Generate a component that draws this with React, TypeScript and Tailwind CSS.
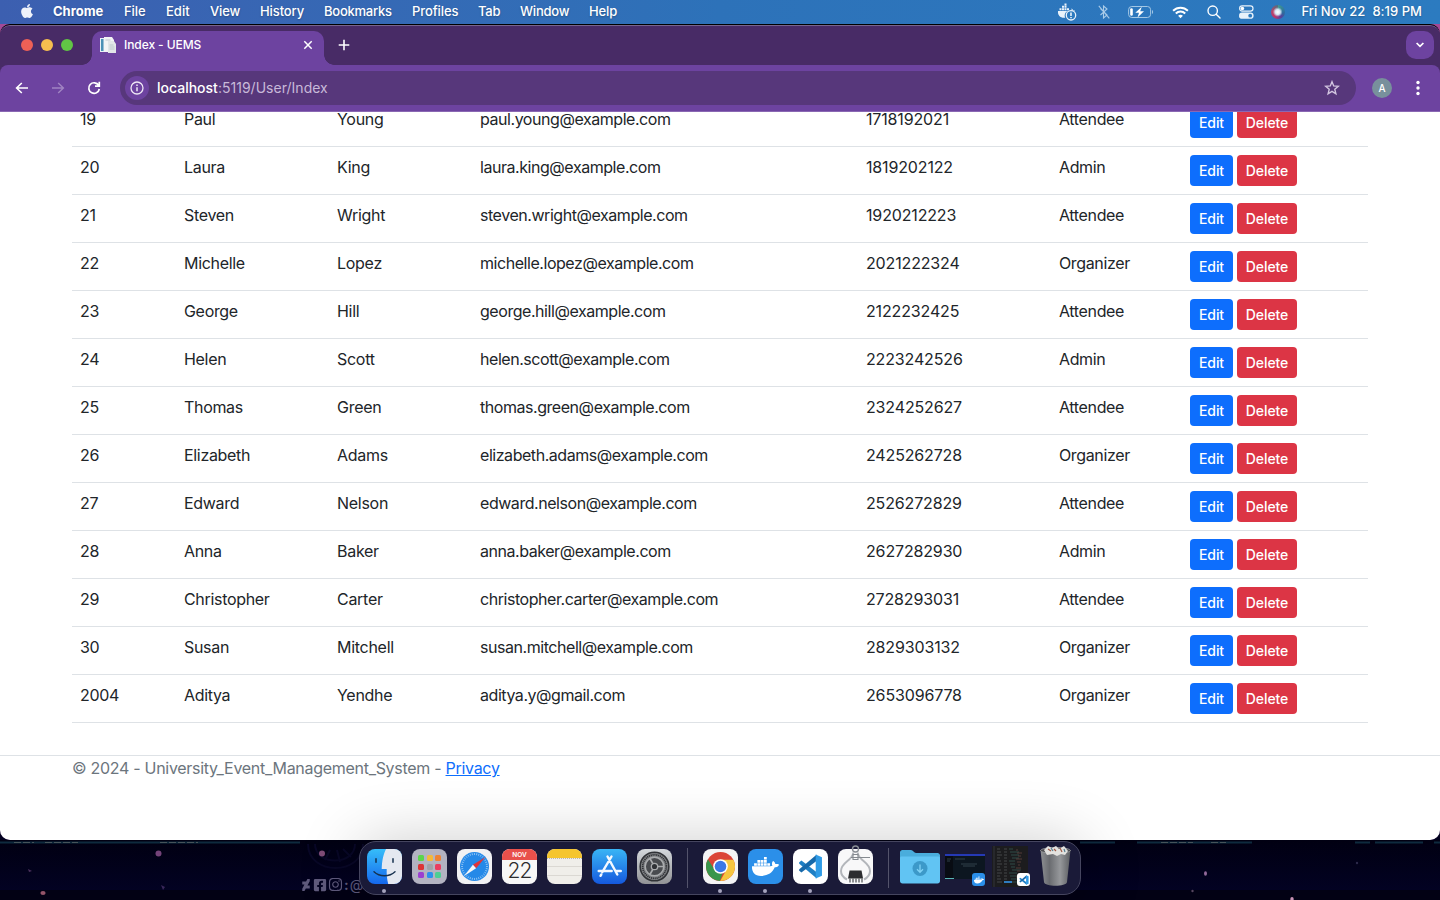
import type { ReactNode } from "react";
import { FaApple, FaDocker, FaDeviantart, FaFacebookSquare, FaInstagram } from "react-icons/fa";

type User = [string, string, string, string, string, string];

const users: User[] = [
  ["19", "Paul", "Young", "paul.young@example.com", "1718192021", "Attendee"],
  ["20", "Laura", "King", "laura.king@example.com", "1819202122", "Admin"],
  ["21", "Steven", "Wright", "steven.wright@example.com", "1920212223", "Attendee"],
  ["22", "Michelle", "Lopez", "michelle.lopez@example.com", "2021222324", "Organizer"],
  ["23", "George", "Hill", "george.hill@example.com", "2122232425", "Attendee"],
  ["24", "Helen", "Scott", "helen.scott@example.com", "2223242526", "Admin"],
  ["25", "Thomas", "Green", "thomas.green@example.com", "2324252627", "Attendee"],
  ["26", "Elizabeth", "Adams", "elizabeth.adams@example.com", "2425262728", "Organizer"],
  ["27", "Edward", "Nelson", "edward.nelson@example.com", "2526272829", "Attendee"],
  ["28", "Anna", "Baker", "anna.baker@example.com", "2627282930", "Admin"],
  ["29", "Christopher", "Carter", "christopher.carter@example.com", "2728293031", "Attendee"],
  ["30", "Susan", "Mitchell", "susan.mitchell@example.com", "2829303132", "Organizer"],
  ["2004", "Aditya", "Yendhe", "aditya.y@gmail.com", "2653096778", "Organizer"],
];

const columnTracking = [
  "tracking-[-0.3px]",
  "tracking-[-0.32px]",
  "tracking-[-0.28px]",
  "tracking-[-0.45px]",
  "tracking-[-0.15px]",
  "tracking-[-0.36px]",
];

function MenuBar() {
  return (
    <header className="flex h-6 shrink-0 items-center bg-linear-to-r from-[#3c5fb0] via-[#2d72b9] via-50% to-[#2c7bc0] pl-[19px] text-[13px] font-medium text-white [text-shadow:0_1px_2px_rgba(0,0,0,0.25)]">
      <FaApple className="mr-[18px] size-4 -translate-y-px text-[#eef2fa]" />
      <span className="w-[71px] font-bold tracking-[0px]">Chrome</span>
      <span className="w-[42px] tracking-[-0.1px]">File</span>
      <span className="w-[44px] tracking-[0px]">Edit</span>
      <span className="w-[50px] tracking-[-0.1px]">View</span>
      <span className="w-[64px] tracking-[-0.1px]">History</span>
      <span className="w-[88px] tracking-[-0.25px]">Bookmarks</span>
      <span className="w-[66px] tracking-[-0.1px]">Profiles</span>
      <span className="w-[42px] tracking-[-0.25px]">Tab</span>
      <span className="w-[69px] tracking-[-0.2px]">Window</span>
      <span className="tracking-[-0.1px]">Help</span>
      <div className="ml-auto flex items-center pr-[18px]">
        <svg width="20" height="18" viewBox="0 0 20 18" className="mr-[21px]" fill="#e9f2fa">
          <path d="M1 8h13.2c.6-.8.5-1.6.1-2.400 1 .4 1.700 1.200 1.800 2 .9-.1 1.500 0 2 .4H10.500a5 5 0 0 0-2.300 6.800C3 15.300.5 12 1 8zM2.500 5.300h2v2h-2zM5 5.300h2v2H5zM7.500 5.300h2v2h-2zM5 2.800h2v2H5zM7.500 2.800h2v2h-2zM7.500.5h2v2h-2zM10 5.300h2v2h-2z" />
          <circle cx="14" cy="12.300" r="4.700" fill="#2c7abf" stroke="#e9f2fa" strokeWidth="1.300" />
          <path d="M14 9.500v3.400M14 14.100v1.200" stroke="#e9f2fa" strokeWidth="1.600" />
        </svg>
        <svg width="12" height="16" viewBox="0 0 12 16" className="mr-[18px]" fill="none" stroke="#a9cbe8" strokeWidth="1.100">
          <path d="M2.500 4.500 9 11l-3.500 3V2L9 5l-6.500 6M.8 1.800l10.500 12.500" />
        </svg>
        <svg width="26" height="14" viewBox="0 0 26 14" className="mr-[18px]">
          <rect x=".6" y="1.500" width="22" height="11" rx="3.200" fill="none" stroke="#a3c7e5" strokeWidth="1" />
          <path d="M24 5v4c1.500-.6 1.500-3.400 0-4z" fill="#a3c7e5" />
          <rect x="2.200" y="3.200" width="2.600" height="7.600" rx="1.200" fill="#fff" />
          <path d="M13.800 1.800 7.300 7.800h3.700l-1.500 4.700 6.500-6.300h-3.800z" fill="#fff" />
        </svg>
        <svg width="17" height="13" viewBox="0 0 17 13" className="mr-[18px]" fill="none" stroke="#fff" strokeWidth="2">
          <path d="M1.100 4.700a10.500 10.500 0 0 1 14.800 0M3.800 7.500a6.700 6.700 0 0 1 9.400 0" />
          <path d="m8.500 12.300 2.400-2.600a3.600 3.600 0 0 0-4.800 0z" fill="#fff" stroke="none" />
        </svg>
        <svg width="14" height="14" viewBox="0 0 14 14" className="mr-[18px]" fill="none" stroke="#fff" strokeWidth="1.400" strokeLinecap="round">
          <circle cx="5.700" cy="5.700" r="4.700" />
          <path d="m9.200 9.200 3.800 3.800" />
        </svg>
        <svg width="15" height="14" viewBox="0 0 15 14" className="mr-[17px]">
          <rect x=".6" y=".9" width="13.400" height="5.200" rx="2.600" fill="none" stroke="#e7f1fa" strokeWidth="1.200" />
          <circle cx="3.400" cy="3.500" r="1.800" fill="#fff" />
          <rect y="7.500" width="14.600" height="6.300" rx="3.150" fill="#e7f1fa" />
          <circle cx="11.200" cy="10.650" r="1.900" fill="#2c7abf" />
        </svg>
        <span className="mr-[16px] size-[14px] rounded-full bg-[radial-gradient(circle_at_48%_50%,#ffffff_0,#d5e6f5_25%,transparent_48%),conic-gradient(#3f9a92,#2c6a9e_100deg,#5a3f9a_150deg,#b8386f_210deg,#b8456a_280deg,#4f6f80)]" />
        <span className="whitespace-pre tracking-[0.03px]">Fri Nov 22  8:19 PM</span>
      </div>
    </header>
  );
}

function TabStrip() {
  return (
    <div className="flex h-[39px] shrink-0 items-stretch bg-[#482b66] pl-[21px]">
      <div className="flex items-center gap-2 pb-[1px]">
        <span className="size-3 rounded-full bg-[#ee6056]" />
        <span className="size-3 rounded-full bg-[#f6be4f]" />
        <span className="size-3 rounded-full bg-[#61c545]" />
      </div>
      <div className="ml-[9px] flex items-end pt-[5px]">
        <span className="size-[10px] bg-[radial-gradient(circle_at_0_0,transparent_9.500px,#6d43a0_10px)]" />
        <div className="flex h-[34px] w-[232px] items-center rounded-t-[10px] bg-[#6d43a0] pr-[11px] pl-2 text-white">
          <svg width="16" height="16" viewBox="0 0 16 16" className="mr-2 mb-[6px]">
            <path d="M0 1h5v14H0z" fill="#e8f0f5" />
            <path d="M1 2h2.500v12H1z" fill="#4a90b5" />
            <path d="M4 0h8l2 3v12H4z" fill="#f2f4f5" />
            <path d="M8 4h6l2 3v9H8z" fill="#e2e6e8" />
            <path d="M9.500 8h4M9.500 10h5M9.500 12h5M5.500 3h5" stroke="#b4bfc5" strokeWidth=".8" />
          </svg>
          <span className="mb-[6px] text-[12px] font-medium tracking-[-0.08px]">Index - UEMS</span>
          <svg width="10" height="10" viewBox="0 0 10 10" className="mb-[7px] ml-auto" stroke="#fff" strokeWidth="1.500">
            <path d="m1.300 1.300 7.400 7.400m0-7.400L1.300 8.700" />
          </svg>
        </div>
        <span className="size-[10px] bg-[radial-gradient(circle_at_100%_0,transparent_9.500px,#6d43a0_10px)]" />
      </div>
      <svg width="12" height="12" viewBox="0 0 12 12" className="mt-[13px] ml-1" stroke="#fff" strokeWidth="1.600">
        <path d="M6 .7v10.600M.7 6h10.600" />
      </svg>
      <div className="mt-[5px] mr-[6px] ml-auto flex size-7 items-center justify-center rounded-[10px] bg-[#6d43a0]">
        <svg width="8" height="6" viewBox="0 0 8 6" fill="none" stroke="#fff" strokeWidth="1.700">
          <path d="m.6 1 3.400 3.400L7.400 1" />
        </svg>
      </div>
    </div>
  );
}

function Toolbar() {
  return (
    <div className="bg-[#482b66]">
      <div className="flex h-[47px] items-center rounded-t-[8px] border-b border-[#8a68b3] bg-[#6d43a0] pl-[15px]">
        <svg width="14" height="12" viewBox="0 0 14 12" fill="none" stroke="#fff" strokeWidth="1.600">
          <path d="M13 6H1.800M6.800 1 1.600 6l5.200 5" />
        </svg>
        <svg width="14" height="12" viewBox="0 0 14 12" className="ml-[22px]" fill="none" stroke="#a084c2" strokeWidth="1.400">
          <path d="M1 6h11.200M7.200 1l5.200 5-5.200 5" />
        </svg>
        <svg width="14" height="14" viewBox="0 0 14 14" className="ml-[22px]" fill="none" stroke="#fff" strokeWidth="1.700">
          <path d="M11.600 4.300A5.300 5.300 0 1 0 12.300 8M12.300.8v4.300H8" />
        </svg>
        <div className="ml-[19px] flex h-[34px] w-[1236px] items-center rounded-full bg-[#57377b] pr-4 pl-[5px]">
          <span className="flex size-6 items-center justify-center rounded-full bg-[#6d43a0]">
            <svg width="14" height="14" viewBox="0 0 14 14" fill="none" stroke="#eee7f5" strokeWidth="1.300">
              <circle cx="7" cy="7" r="6" />
              <path d="M7 6.200v4M7 3.500v1.500" strokeWidth="1.500" />
            </svg>
          </span>
          <span className="mb-px ml-2 text-[14px] tracking-[0.02px] text-[#c8b9d9]">
            <span className="font-medium tracking-[0px] text-white">localhost</span>:5119/User/Index
          </span>
          <svg width="16" height="16" viewBox="0 0 16 16" className="ml-auto" fill="none" stroke="#d2c5e0" strokeWidth="1.400">
            <path d="m8 1.700 1.700 4.200 4.600.4-3.500 3 1.100 4.500L8 11.400l-3.900 2.400 1.100-4.500-3.500-3 4.600-.4z" />
          </svg>
        </div>
        <span className="ml-4 flex size-5 items-center justify-center rounded-full bg-[#78909c] text-[10px] font-medium text-white">A</span>
        <svg width="4" height="16" viewBox="0 0 4 16" className="ml-6" fill="#fff">
          <circle cx="2" cy="2.500" r="1.700" />
          <circle cx="2" cy="8" r="1.700" />
          <circle cx="2" cy="13.500" r="1.700" />
        </svg>
      </div>
    </div>
  );
}

function Page() {
  return (
    <main className="flex-1 overflow-hidden bg-white text-[16px] leading-6 text-[#212529]">
      <table className="mx-auto -mt-[13px] w-[1296px] table-fixed border-separate border-spacing-0">
        <colgroup>
          <col className="w-[104px]" />
          <col className="w-[153px]" />
          <col className="w-[143px]" />
          <col className="w-[386px]" />
          <col className="w-[193px]" />
          <col className="w-[131px]" />
          <col className="w-[186px]" />
        </colgroup>
        <tbody>
          {users.map((user) => (
            <tr key={user[0]} className="align-top">
              {user.map((value, i) => (
                <td key={i} className={"border-b border-[#dee2e6] p-2 whitespace-nowrap " + columnTracking[i]}>{value}</td>
              ))}
              <td className="border-b border-[#dee2e6] p-2">
                <div className="flex gap-1 text-[14px] font-[450] tracking-[-0.08px] text-white">
                  <button className="h-[31px] w-[43px] rounded-[4px] bg-[#0d6efd]">Edit</button>
                  <button className="h-[31px] w-[60px] rounded-[4px] bg-[#dc3545]">Delete</button>
                </div>
              </td>
            </tr>
          ))}
        </tbody>
      </table>
      <footer className="mt-8 border-t border-[#dee2e6] px-[72px] tracking-[-0.29px] text-[#6c757d]">
        © 2024 - University_Event_Management_System -{" "}
        <a className="text-[#0d6efd] underline">Privacy</a>
      </footer>
    </main>
  );
}

function VsCodeMark({ className }: { className: string }) {
  return (
    <svg viewBox="0 0 24 24" className={className}>
      <path d="M1 8.200 3.300 6.300 18 17.500v6L1.200 9.300z" fill="#1f7fc4" />
      <path d="M1 15.800 3.300 17.700 18 6.500v-6L1.200 14.700z" fill="#1769aa" />
      <path d="M17 .5 23 3.200v17.600L17 23.500z" fill="#2f9be6" />
    </svg>
  );
}

function DockIcon({ children, active, className = "" }: { children: ReactNode; active?: boolean; className?: string }) {
  return (
    <div className={"relative size-[35px] shrink-0 " + className}>
      {children}
      {active && <span className="absolute -bottom-[9px] left-[15px] size-1 rounded-full bg-[#a5a3bd]" />}
    </div>
  );
}

function FinderIcon() {
  return (
    <svg viewBox="0 0 35 35">
      <defs>
        <linearGradient id="finder" x2="0" y2="1"><stop stopColor="#36bdf9" /><stop offset="1" stopColor="#1568ed" /></linearGradient>
        <clipPath id="finderClip"><rect width="35" height="35" rx="8" /></clipPath>
      </defs>
      <g clipPath="url(#finderClip)">
        <path fill="url(#finder)" d="M0 0h35v35H0z" />
        <path fill="#e4e8f0" d="M19 0c-2.500 5-4 11-4.300 20h5c-.2 5 .2 10 1.500 15H35V0z" />
        <path d="M9 9.800v3.400M26 9.800v3.400" stroke="#15304e" strokeWidth="1.500" strokeLinecap="round" />
        <path d="M7 22.800c5.500 5.300 15.500 5.300 21 0" fill="none" stroke="#15304e" strokeWidth="1.400" strokeLinecap="round" />
      </g>
    </svg>
  );
}

const launchpadColors = ["#5bd64b", "#f4b93a", "#ee8335", "#dd3434", "#a0a2a8", "#ea3c60", "#9b40d1", "#2c91ed", "#4ccf93"];
const angles = [0, 10, 20, 30, 40, 50, 60, 70, 80, 90, 100, 110, 120, 130, 140, 150, 160, 170];

function SafariIcon() {
  return (
    <svg viewBox="0 0 35 35">
      <rect width="35" height="35" rx="8" fill="#f1f1f3" />
      <circle cx="17.500" cy="17.500" r="14.500" fill="#2589e8" />
      {angles.map((a) => (
        <path key={a} d="M17.500 4v2M17.500 29v2" stroke="#c5e1f9" strokeWidth=".6" transform={`rotate(${a} 17.500 17.500)`} />
      ))}
      <path d="m28.500 8-12.600 7.700 3.200 3.600z" fill="#e0343a" />
      <path d="m6.800 27.200 9.100-11.500 3.200 3.600z" fill="#f5f6f8" />
    </svg>
  );
}

function AppStoreIcon() {
  return (
    <svg viewBox="0 0 35 35">
      <defs><linearGradient id="store" x2="0" y2="1"><stop stopColor="#39b5f5" /><stop offset="1" stopColor="#1559de" /></linearGradient></defs>
      <rect width="35" height="35" rx="8" fill="url(#store)" />
      <path d="m19.500 7.500-9.200 15.700M15.500 7.500l9.800 18M6.700 22h13M24.500 22h4.300M9.300 25.500l-.8 1.300" stroke="#f4f9ff" strokeWidth="2.400" strokeLinecap="round" />
    </svg>
  );
}

function SettingsIcon() {
  return (
    <svg viewBox="0 0 35 35" fill="none">
      <defs><linearGradient id="settings" x2="0" y2="1"><stop stopColor="#d4d8dc" /><stop offset="1" stopColor="#929396" /></linearGradient></defs>
      <rect width="35" height="35" rx="8" fill="url(#settings)" />
      <circle cx="17.500" cy="17.500" r="14.300" fill="#85878a" stroke="#303236" strokeWidth="1.600" />
      <circle cx="17.500" cy="17.500" r="11.800" stroke="#303236" strokeWidth="1.800" strokeDasharray="1.200 .7" />
      <circle cx="17.500" cy="17.500" r="9.300" fill="#494b4f" stroke="#aaacae" strokeWidth="1.500" />
      <circle cx="17.500" cy="17.500" r="3.200" fill="#303236" stroke="#aaacae" strokeWidth="1.300" />
      <path d="M20.700 17.500h6M15.900 14.700l-3-5.200M15.900 20.300l-3 5.200" stroke="#aaacae" strokeWidth="1.700" />
    </svg>
  );
}

function ChromeIcon() {
  return (
    <svg viewBox="0 0 35 35">
      <rect width="35" height="35" rx="8" fill="#f4f4f5" />
      <circle cx="17.500" cy="17.500" r="14.500" fill="#db4437" />
      <path d="M17.500 10.800h12.900A14.500 14.500 0 0 1 17.200 32l6.100-11.100z" fill="#f7c640" />
      <path d="M4.900 10.300 11.700 20.900c1.500 2.500 4.500 4 8 3L16.800 32A14.500 14.500 0 0 1 4.900 10.300z" fill="#38964b" />
      <circle cx="17.500" cy="17.500" r="7.300" fill="#fff" />
      <circle cx="17.500" cy="17.500" r="5.800" fill="#3b78e7" />
    </svg>
  );
}

function SystemInfoIcon() {
  return (
    <svg viewBox="0 0 35 39" className="-mt-1 h-[39px]" fill="none">
      <rect y="4" width="35" height="35" rx="8" fill="#f8f8f9" />
      <circle cx="17.500" cy="4" r="3" stroke="#8a8f95" strokeWidth="1.400" />
      <path d="M15.300 7.500C14.500 16 3 17 3 26c0 4 2 6.500 6 8.500M19.700 7.500C20.500 16 32 17 32 26c0 4-2 6.500-6 8.500" stroke="#b3b6bb" strokeWidth="2" />
      <path d="M13 12.500h19M15 9.500h5v5h-5z" stroke="#858a90" strokeWidth="1.100" />
      <path d="M11.500 25.500h12l1.500 8H10z" fill="#2b2c2f" />
      <path d="M12 33.500v4M15 33.500v4M18 33.500v4M21 33.500v4M24 33.500v4" stroke="#54575b" strokeWidth="1.300" />
    </svg>
  );
}

function FolderIcon() {
  return (
    <svg width="40" height="35" viewBox="0 0 40 35" className="ml-[11px] shrink-0">
      <path d="M0 3.500C0 2 1 1 2.500 1H11c2 0 3 3 5 3h21.500C39 4 40 5 40 6.500V20H0z" fill="#4aaddc" />
      <path d="M0 9c0-1 .6-1.500 1.500-1.500h37c.9 0 1.500.5 1.500 1.500v23c0 1.500-1 2.500-2.500 2.500h-35C1 34.500 0 33.500 0 32z" fill="#61c4f3" />
      <circle cx="20" cy="19.500" r="7.500" fill="#3c99c9" />
      <path d="M20 15.500v7.500M17 20.300l3 3 3-3" fill="none" stroke="#80d3f7" strokeWidth="1.300" />
    </svg>
  );
}

const codeLines = [3, 6, 9, 12, 15, 18, 21, 24, 27, 30, 33, 36];

function Dock() {
  return (
    <div className="relative flex h-[54px] w-[722px] items-start rounded-[17px] border border-[#45455f] bg-[#1a1a38] pt-[7px] pl-[7px] shadow-[0_4px_64px_rgba(0,0,0,0.24)]">
      <div className="flex gap-[10px]">
        <DockIcon active><FinderIcon /></DockIcon>
        <DockIcon className="flex items-center justify-center rounded-[8px] bg-[#b3b3c1]">
          <div className="grid grid-cols-3 gap-[2.500px]">
            {launchpadColors.map((c) => <span key={c} className="size-[6px] rounded-[1.500px]" style={{ background: c }} />)}
          </div>
        </DockIcon>
        <DockIcon><SafariIcon /></DockIcon>
        <DockIcon className="flex flex-col items-center overflow-hidden rounded-[8px] bg-[#f7f7f7]">
          <span className="h-[11px] w-full bg-[#e8504b] text-center text-[6.500px] leading-[12px] font-semibold text-white">NOV</span>
          <span className="text-[21px] leading-[22px] font-light tracking-[-0.8px] text-[#2c2c2e]">22</span>
        </DockIcon>
        <DockIcon className="overflow-hidden rounded-[8px] bg-[#f0eeea]">
          <div className="h-[9px] bg-[#f5c52e]" />
          <div className="h-[8px] border-t border-dotted border-[#b9b6ae]" />
          <div className="h-[10px] border-y border-[#dbd8d3]" />
        </DockIcon>
        <DockIcon><AppStoreIcon /></DockIcon>
        <DockIcon><SettingsIcon /></DockIcon>
      </div>
      <span className="-mt-px ml-[15px] h-10 w-px bg-[#53536b]" />
      <div className="ml-[15px] flex gap-[10px]">
        <DockIcon active><ChromeIcon /></DockIcon>
        <DockIcon active className="flex items-center justify-center rounded-[8px] bg-[#2b8fe9]"><FaDocker className="size-[27px] text-white" /></DockIcon>
        <DockIcon active className="flex items-center justify-center rounded-[8px] bg-white"><VsCodeMark className="size-[25px]" /></DockIcon>
        <DockIcon><SystemInfoIcon /></DockIcon>
      </div>
      <span className="-mt-px ml-[15px] h-10 w-px bg-[#53536b]" />
      <FolderIcon />
      <div className="relative mt-[5px] ml-[5px] h-[25px] w-10 shrink-0 bg-[#0c1620]">
        <svg viewBox="0 0 40 25">
          <path d="M0 0h40v2H0z" fill="#2539b5" />
          <path d="M0 2h8v23H0z" fill="#080c13" />
          <path d="M2 5h4M2 7h3M10 5h10M16 10h16M18 12h12" stroke="#3b4c57" strokeWidth=".8" />
          <path d="M0 24.500h9" stroke="#58b5b4" />
        </svg>
        <span className="absolute top-[19px] left-[27px] flex size-[13px] items-center justify-center rounded-[3px] bg-[#2b8fe9]"><FaDocker className="size-[10px] text-white" /></span>
      </div>
      <div className="relative -mt-[3px] ml-[7px] h-[41px] w-9 shrink-0 bg-[#1c1c1e]">
        <svg viewBox="0 0 36 41" fill="none">
          <path d="M2 0v41" stroke="#33343a" />
          {codeLines.map((y, i) => (
            <g key={y} strokeWidth=".7" opacity=".75">
              <path d={`M5 ${y}h${3 + (i % 3)}M12 ${y}h3`} stroke="#6b6d72" />
              <path d={`M${17 + (i % 4)} ${y}h${4 + ((i * 5) % 6)}`} stroke="#43766d" />
              <path d={`M${24 + (i % 3)} ${y + 1}h${2 + ((i * 3) % 5)}`} stroke="#86574d" />
            </g>
          ))}
          <path d="M12 36h8" stroke="#2f7cc0" strokeWidth="2" />
        </svg>
        <span className="absolute top-[27px] left-[25px] flex size-[13px] items-center justify-center rounded-[3px] bg-white"><VsCodeMark className="size-[10px]" /></span>
      </div>
      <svg width="31" height="41" viewBox="0 0 31 41" className="-mt-[3px] ml-3 shrink-0">
        <defs><linearGradient id="trash"><stop stopColor="#8e9093" /><stop offset=".3" stopColor="#6a6c70" /><stop offset=".65" stopColor="#96989b" /><stop offset="1" stopColor="#5b5d61" /></linearGradient></defs>
        <path d="M.5 4h30l-3.500 32c-.5 5-22.500 5-23 0z" fill="url(#trash)" />
        <ellipse cx="15.500" cy="4.500" rx="15" ry="3" fill="#4c4d50" stroke="#a9abad" strokeWidth=".7" />
        <path d="m4 4 4-4 4 2 4-2 3 3 5-3 4 5-3 4-4-1-4 2-4-2-6 1z" fill="#e3e2df" />
        <path d="m8 3 3 2M20 2l2 4M14 3l2 2" stroke="#9f5a46" strokeWidth="1.200" />
        <path d="m11 2 2 3M24 3l1 3" stroke="#537f92" strokeWidth="1.200" />
      </svg>
    </div>
  );
}

function Wallpaper() {
  return (
    <svg className="absolute inset-0" width="1440" height="60" viewBox="0 0 1440 60">
      <path d="M0 50h1440v10H0z" fill="#020114" />
      <path d="M0 2.500h300M1080 2.500h35M1137 2.500h115M1355 2.500h15M1375 2.500h48M1434 2.500h6" stroke="#0e2a3e" strokeWidth="2" />
      <path d="M14 2.500h20M45 2.500h33M160 2.500h38M1161 2.500h32M1211 2.500h15" stroke="#46545b" strokeWidth="1" strokeDasharray="7 2" />
      <g fill="none" stroke="#080726" strokeWidth="2">
        <path d="M308 4c0 32 55 32 55 0M315 4c0 22 40 22 40 0" />
        <path d="m330 10-5 10M337 10l3 12M343 9l8 8" />
      </g>
      <circle cx="158.500" cy="13.500" r="3" fill="#744379" />
      <circle cx="322" cy="13.500" r="3" fill="#804c78" />
      <ellipse cx="43" cy="53" rx="2.600" ry="2" fill="#945569" />
      <path d="m28 29 4 2-3 1z" fill="#4b315d" />
      <path d="m161 45 4 2-2 3z" fill="#39275a" />
      <ellipse cx="1205.500" cy="33.500" rx="1.500" ry="2.300" fill="#92699a" />
      <circle cx="1192.500" cy="51" r="1.200" fill="#57465f" />
      <circle cx="1357" cy="23" r="1.200" fill="#2c284a" />
      <ellipse cx="1292" cy="59" rx="1.700" ry="2" fill="#c892b5" />
    </svg>
  );
}

export default function App() {
  return (
    <div className="flex h-[900px] w-[1440px] flex-col overflow-hidden bg-[#02011f] font-[Inter,sans-serif]">
      <MenuBar />
      <div className="flex h-[816px] shrink-0 flex-col bg-[linear-gradient(180deg,#a34a97_0,#a34a97_8px,#02011f_12px)]">
        <div className="flex flex-1 flex-col overflow-hidden rounded-[10px] border-t border-black bg-[#482b66]">
          <div className="flex flex-1 flex-col overflow-hidden rounded-t-[10px] border-t border-[#77658c]">
            <TabStrip />
            <Toolbar />
            <Page />
          </div>
        </div>
      </div>
      <div className="relative flex h-[60px] shrink-0 justify-center bg-linear-to-b from-[#010012] to-[#030326] pt-px">
        <Wallpaper />
        <div className="absolute top-[37px] left-[300px] flex items-center gap-[1px] text-[14px] leading-[14px] text-[#5f5a7c]">
          <FaDeviantart className="size-3" />
          <FaFacebookSquare className="size-[14px]" />
          <FaInstagram className="size-[15px]" />
          <span className="font-bold">:</span>
          <span>@</span>
        </div>
        <Dock />
      </div>
    </div>
  );
}
